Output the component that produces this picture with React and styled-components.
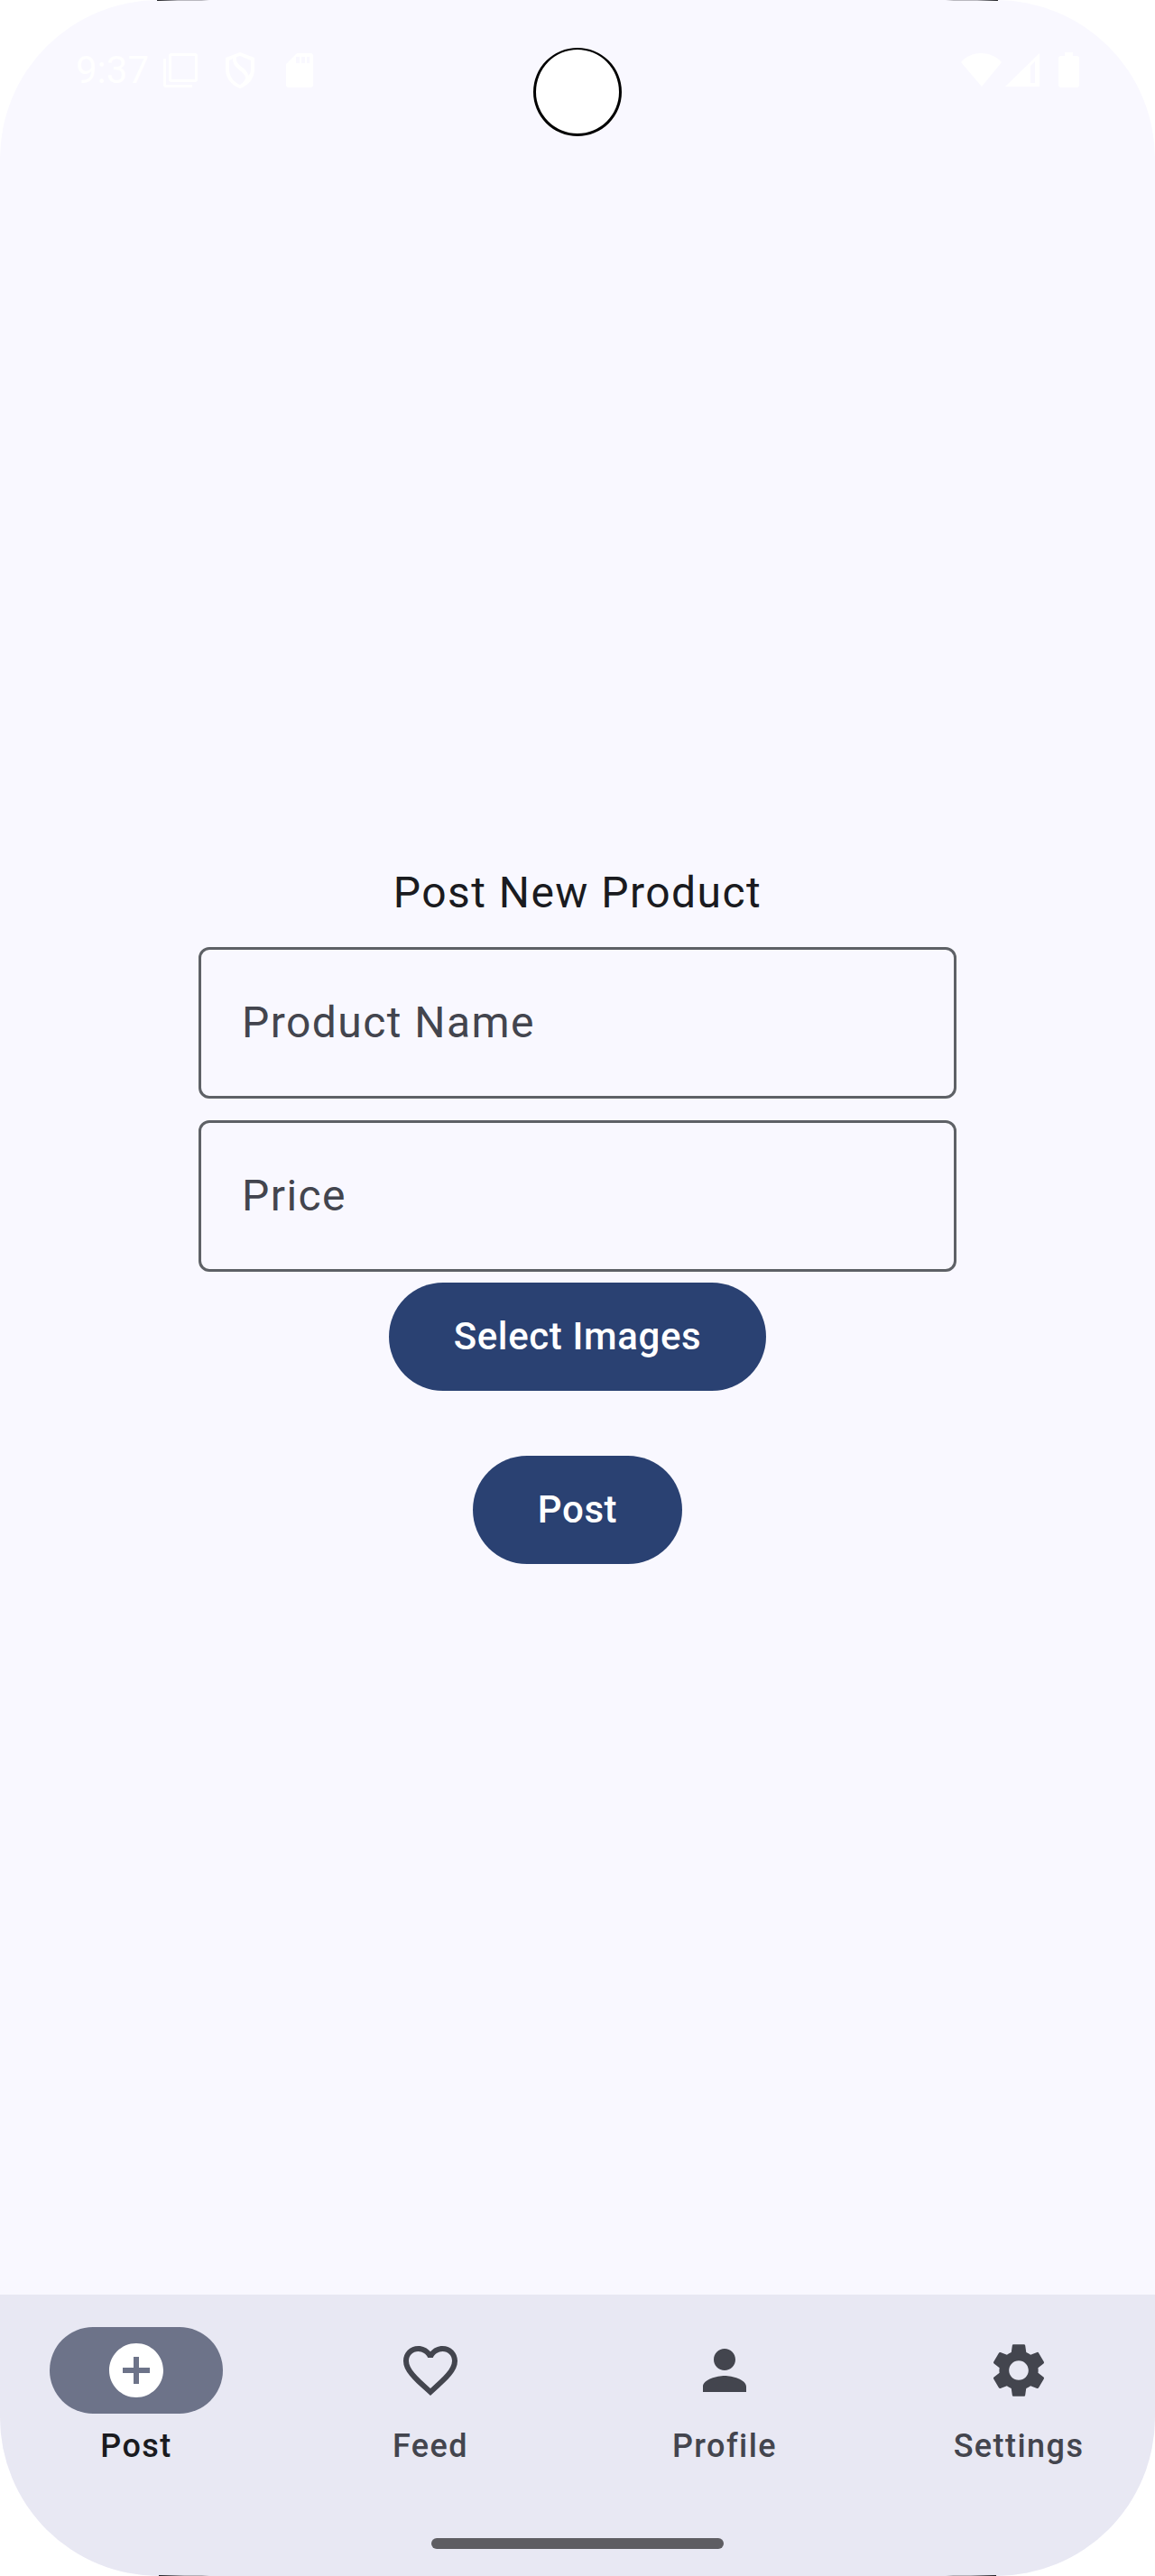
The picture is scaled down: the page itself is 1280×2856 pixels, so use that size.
import React, { useState } from "react";
import styled, { createGlobalStyle } from "styled-components";
import { MdAddCircle, MdFavoriteBorder, MdPerson, MdSettings } from "react-icons/md";

const GlobalStyle = createGlobalStyle`
  *, *::before, *::after { box-sizing: border-box; }
  body { margin: 0; background: #ffffff; font-family: Roboto, "Liberation Sans", sans-serif; }
`;

const Screen = styled.div`
  display: flex;
  flex-direction: column;
  min-height: 100vh;
  overflow: hidden;
  border-radius: 176px;
  background: #f9f8ff;
  color: #1a1b20;
`;

const StatusBar = styled.header`
  display: grid;
  grid-template-columns: 1fr 98px 1fr;
  height: 156px;
  padding: 0 84px;
  color: #ffffff;
  background:
    linear-gradient(90deg, #1a1b20, #b9b8bf 40%, #b9b8bf 85%, transparent) 174px 0 / 58px 1px no-repeat,
    linear-gradient(270deg, #1a1b20, #b9b8bf 40%, #b9b8bf 85%, transparent) calc(100% - 174px) 0 / 58px 1px no-repeat;
`;

const StatusGroup = styled.div`
  display: flex;
  align-items: center;
  align-self: start;
  justify-content: ${(p) => (p.$end ? "flex-end" : "flex-start")};
  height: 48px;
  margin-top: 54px;
`;

const Clock = styled.time`
  margin-right: 15px;
  font-size: 42px;
  line-height: 48px;
`;

const StatusIcon = styled.svg`
  flex: none;
  width: ${(p) => p.$width}px;
  height: 40px;
  margin-right: ${(p) => p.$gap || 0}px;
  fill: currentColor;
`;

const Camera = styled.div`
  width: 98px;
  height: 98px;
  margin-top: 53px;
  border: 3px solid #000000;
  border-top-width: 2px;
  border-radius: 50%;
  background: #ffffff;
`;

const Form = styled.form`
  flex: 1;
  display: flex;
  flex-direction: column;
  align-items: center;
  justify-content: center;
`;

const Title = styled.h1`
  margin: 0 0 24px;
  font-size: 48px;
  font-weight: 400;
  line-height: 72px;
  letter-spacing: 0.03em;
`;

const Field = styled.input`
  display: block;
  width: 840px;
  max-width: 90%;
  height: 168px;
  margin-bottom: ${(p) => p.$gap}px;
  padding: 0 45px 2px;
  border: 3px solid #5e6166;
  border-radius: 12px;
  outline: none;
  background: transparent;
  color: #1a1b20;
  font: 400 48px Roboto, "Liberation Sans", sans-serif;
  letter-spacing: 0.03em;

  &::placeholder { color: #43454e; opacity: 1; }
`;

const Button = styled.button`
  height: 120px;
  margin-bottom: ${(p) => p.$gap}px;
  padding: 0 72px 2px;
  border: 0;
  border-radius: 60px;
  background: #2a4172;
  color: #ffffff;
  font: 500 42px Roboto, "Liberation Sans", sans-serif;
  letter-spacing: 0.015em;
  cursor: pointer;
`;

const BottomBar = styled.footer`
  display: flex;
  flex-direction: column;
  align-items: center;
  padding: 36px 0 30px;
  background:
    linear-gradient(90deg, #1a1b20, #b1b0b8 50%, #b1b0b8 85%, transparent) 176px 100% / 56px 1px no-repeat,
    linear-gradient(270deg, #1a1b20, #b1b0b8 50%, #b1b0b8 85%, transparent) calc(100% - 176px) 100% / 56px 1px no-repeat,
    #e8e8f3;
`;

const Tabs = styled.nav`
  display: grid;
  grid-template-columns: repeat(4, 1fr);
  gap: 24px;
  width: 100%;
  margin-bottom: 78px;
`;

const Tab = styled.a`
  display: flex;
  flex-direction: column;
  align-items: center;
  gap: 12px;
  color: ${(p) => (p.$active ? "#1a1b20" : "#43454e")};
  font-size: 36px;
  font-weight: 500;
  line-height: 48px;
  letter-spacing: 0.04em;
  text-decoration: none;
`;

const Indicator = styled.span`
  display: flex;
  align-items: center;
  justify-content: center;
  width: 192px;
  height: 96px;
  border-radius: 48px;
  background: ${(p) => (p.$active ? "#6d7389" : "transparent")};
  color: ${(p) => (p.$active ? "#ffffff" : "#43454e")};

  svg { width: 72px; height: 72px; }
`;

const HomeHandle = styled.div`
  width: 324px;
  height: 12px;
  border-radius: 6px;
  background: #5e5d62;
`;

const TABS = [
  { label: "Post", icon: MdAddCircle },
  { label: "Feed", icon: MdFavoriteBorder },
  { label: "Profile", icon: MdPerson },
  { label: "Settings", icon: MdSettings },
];

export default function App() {
  const [active, setActive] = useState("Post");
  const [name, setName] = useState("");
  const [price, setPrice] = useState("");

  return (
    <>
      <GlobalStyle />
      <Screen>
        <StatusBar>
          <StatusGroup>
            <Clock>9:37</Clock>
            <StatusIcon $width={40} $gap={29} viewBox="0 0 40 40" aria-hidden="true">
              <path fillRule="evenodd" d="M10 1h26a3 3 0 0 1 3 3v26a3 3 0 0 1-3 3H10a3 3 0 0 1-3-3V4a3 3 0 0 1 3-3zm0 3v26h26V4zM1 7h3v29h29v3H4a3 3 0 0 1-3-3z" />
            </StatusIcon>
            <StatusIcon $width={34} $gap={34} viewBox="0 0 34 40" aria-hidden="true">
              <path fillRule="evenodd" d="M17 0l16 6v13c0 10-7 18-16 21C8 37 1 29 1 19V6zM9 7L5 9v10c0 8 5 14 12 17 3-2 5-4 6-7 0-4-2-5-5-8-5-4-9-7-9-14zM13 5c-1 6 3 9 7 12 3 3 6 5 6 9 2-2 3-4 3-7V9L17 4z" />
            </StatusIcon>
            <StatusIcon $width={30} viewBox="0 0 30 40" aria-hidden="true">
              <path fillRule="evenodd" d="M12 1h15a3 3 0 0 1 3 3v32a3 3 0 0 1-3 3H3a3 3 0 0 1-3-3V13zm-1 4v7h4V5zm6 0v7h4V5zm6 0v7h3V5z" />
            </StatusIcon>
          </StatusGroup>
          <Camera />
          <StatusGroup $end>
            <StatusIcon $width={45} $gap={4} viewBox="0 0 45 40" aria-hidden="true">
              <path d="M0 11C6 4 14 1 22 1s17 3 23 10L23 38z" />
            </StatusIcon>
            <StatusIcon $width={38} $gap={21} viewBox="0 0 38 40" aria-hidden="true">
              <path fillRule="evenodd" d="M38 1v37H0zM28 15v19h5V10z" />
            </StatusIcon>
            <StatusIcon $width={23} viewBox="0 0 23 40" aria-hidden="true">
              <path d="M7 0h9v4h4a3 3 0 0 1 3 3v29a3 3 0 0 1-3 3H3a3 3 0 0 1-3-3V7a3 3 0 0 1 3-3h4z" />
            </StatusIcon>
          </StatusGroup>
        </StatusBar>

        <Form onSubmit={(e) => e.preventDefault()}>
          <Title>Post New Product</Title>
          <Field
            $gap={24}
            aria-label="Product Name"
            placeholder="Product Name"
            value={name}
            onChange={(e) => setName(e.target.value)}
          />
          <Field
            $gap={12}
            aria-label="Price"
            placeholder="Price"
            value={price}
            onChange={(e) => setPrice(e.target.value)}
          />
          <Button type="button" $gap={72}>Select Images</Button>
          <Button type="submit" $gap={12}>Post</Button>
        </Form>

        <BottomBar>
          <Tabs>
            {TABS.map(({ label, icon: Icon }) => (
              <Tab
                key={label}
                href={`#${label.toLowerCase()}`}
                $active={active === label}
                onClick={() => setActive(label)}
              >
                <Indicator $active={active === label}>
                  <Icon aria-hidden="true" />
                </Indicator>
                {label}
              </Tab>
            ))}
          </Tabs>
          <HomeHandle />
        </BottomBar>
      </Screen>
    </>
  );
}
